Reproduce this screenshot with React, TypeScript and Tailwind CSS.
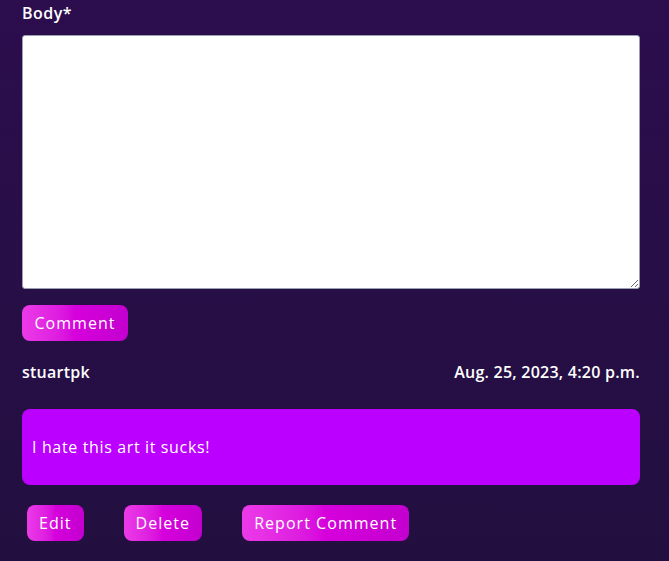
import React from 'react';

const btn =
  'h-9 px-3 rounded-lg bg-gradient-to-r from-[#ec3ae8] via-[#d600dc] to-[#c300cf] text-white text-base leading-none tracking-[0.065em]';

export default function App() {
  return (
    <div
      className="min-h-[561px] w-full bg-gradient-to-b from-[#2c0d4e] to-[#220f3f] pl-[22px] pr-[29px] pb-5 text-white"
      style={{ fontFamily: '"Open Sans", "Liberation Sans", sans-serif' }}
    >
      <label className="block pt-[3px] text-base font-semibold leading-5 tracking-[0.03em]">Body*</label>
      <textarea className="mt-[12px] block h-[254px] w-full resize-y rounded-[3px] border border-gray-400 bg-white text-black" />
      <button className={`${btn} mt-4 w-[106px]`}>Comment</button>
      <div className="mt-[21px] flex items-center justify-between text-base font-semibold leading-5 tracking-[0.015em]">
        <span>stuartpk</span>
        <span>Aug. 25, 2023, 4:20 p.m.</span>
      </div>
      <div className="mt-[27px] flex h-[76px] items-center rounded-lg bg-[#bb00ff] px-[10px] text-base font-medium tracking-[0.04em]">
        I hate this art it sucks!
      </div>
      <div className="ml-[5px] mt-5 flex gap-10">
        <button className={btn}>Edit</button>
        <button className={btn}>Delete</button>
        <button className={btn}>Report Comment</button>
      </div>
    </div>
  );
}
